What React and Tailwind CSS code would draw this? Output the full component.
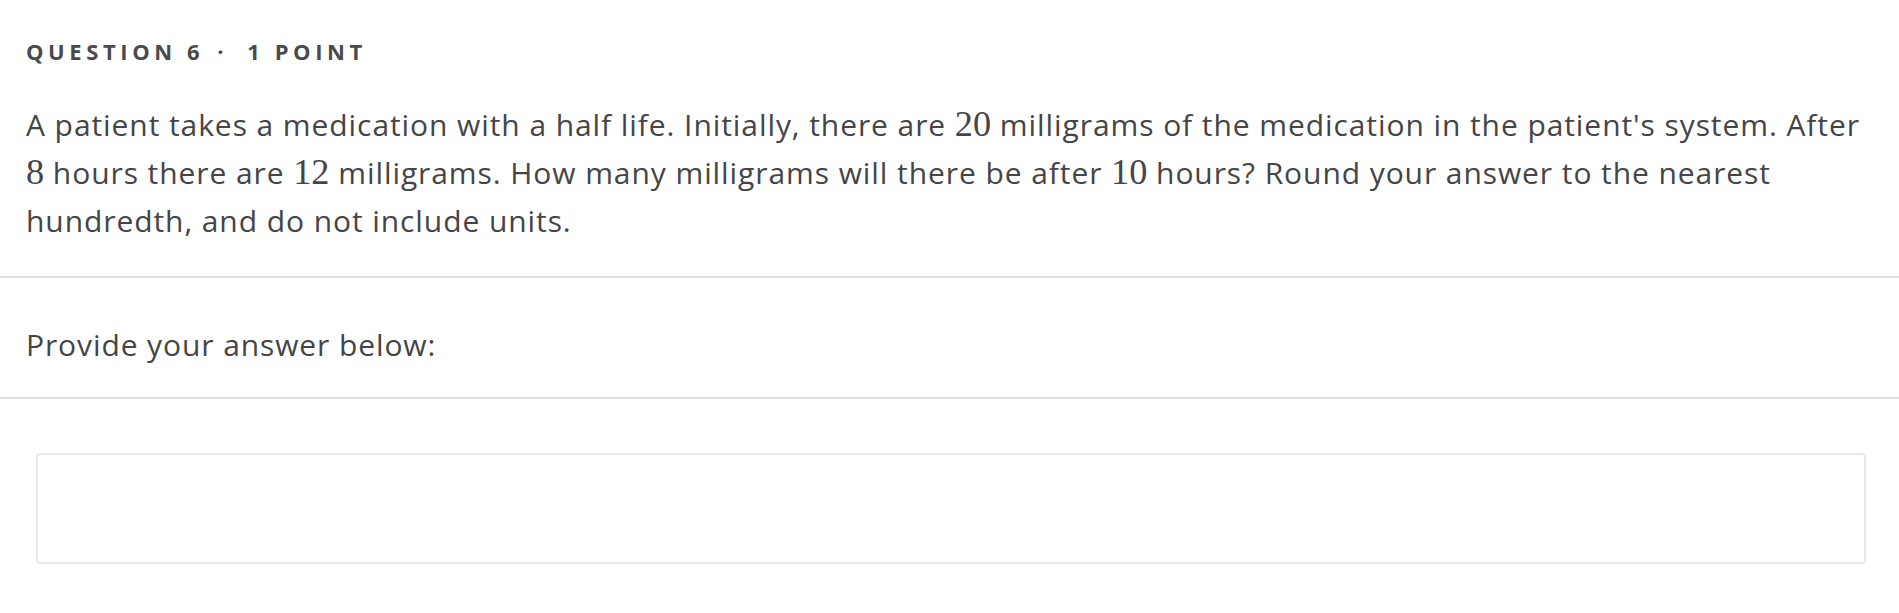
import React from "react";

const M = ({ children }) => (
  <span className="font-['Liberation_Serif',serif] text-[1.21em] leading-none tracking-normal">
    {children}
  </span>
);

export default function App() {
  return (
    <div className="min-h-screen bg-white font-['Open_Sans',sans-serif] text-[#454545]">
      {/* Question */}
      <div className="px-[26px] pt-[37px] pb-[31px]">
        <div className="text-[22px] leading-[28px] font-bold tracking-[4.6px] text-[#4a4a4a]">
          QUESTION 6<span className="ml-[13px] mr-[19px]">·</span>1 POINT
        </div>
        <p className="mt-[36px] text-[30px] leading-[48px] tracking-[0.92px]">
          A patient takes a medication with a half life. Initially, there are{" "}
          <M>20</M> milligrams of the medication in the patient's system. After{" "}
          <M>8</M> hours there are <M>12</M> milligrams. How many milligrams
          will there be after <M>10</M> hours? Round your answer to the nearest
          hundredth, and do not include units.
        </p>
      </div>

      <div className="border-t-2 border-[#dedede]" />

      <div className="px-[26px] pt-[43px] pb-[28px] text-[30px] leading-[48px] tracking-[0.9px]">
        Provide your answer below:
      </div>

      <div className="border-t-2 border-[#dedede]" />

      {/* Answer */}
      <div className="pl-[36px] pr-[33px] pt-[54px] pb-[49px]">
        <div className="h-[111px] rounded-[4px] border-2 border-[#e8e8e8] bg-white" />
      </div>
    </div>
  );
}
